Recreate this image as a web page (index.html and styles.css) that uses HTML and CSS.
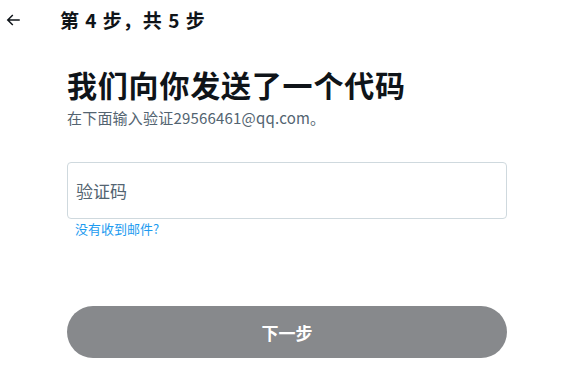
FILE: index.html
```html
<!doctype html>
<html lang="zh">
  <head>
    <meta charset="UTF-8" />
    <meta name="viewport" content="width=device-width, initial-scale=1.0" />
    <title>验证码</title>
    <link rel="stylesheet" href="styles.css">
  </head>
  <body>
    <div class="topbar">
      <button class="back-btn" aria-label="返回">
        <svg viewBox="0 0 24 24" width="18" height="18">
          <path d="M7.414 13l5.043 5.04-1.414 1.42L3.586 12l7.457-7.46 1.414 1.42L7.414 11H21v2H7.414z"/>
        </svg>
      </button>
      <div class="step">第 4 步，共 5 步</div>
    </div>

    <div class="content">
      <h1>我们向你发送了一个代码</h1>
      <p class="sub">在下面输入验证29566461@qq.com。</p>

      <div class="field">
        <input type="text" placeholder="验证码" />
      </div>
      <a class="resend" href="#">没有收到邮件?</a>

      <button class="next-btn" disabled>下一步</button>
    </div>
  </body>
</html>
```

FILE: styles.css
```css
body {
  margin: 0;
  font-family: "Noto Sans CJK SC", "Liberation Sans", sans-serif;
  background-color: #fff;
  color: #0f1419;
}

.topbar {
  display: flex;
  align-items: center;
  height: 40px;
}

.back-btn {
  width: 28px;
  height: 40px;
  padding: 0 0 0 4px;
  border: none;
  background: none;
  display: flex;
  align-items: center;
  cursor: pointer;
}

.back-btn svg {
  fill: #0f1419;
}

.step {
  margin-left: 32px;
  margin-top: -1px;
  font-size: 19px;
  font-weight: 700;
  letter-spacing: 1px;
}

.content {
  padding: 24px 61px 0 67px;
}

.content h1 {
  margin: 0;
  font-size: 30px;
  font-weight: 700;
  line-height: 40px;
  letter-spacing: 0.8px;
}

.sub {
  margin: 4px 0 0;
  font-size: 15px;
  line-height: 20px;
  letter-spacing: 0.2px;
  color: #536471;
}

.field {
  margin-top: 34px;
  height: 55px;
  border: 1px solid #cfd9de;
  border-radius: 4px;
  display: flex;
}

.field input {
  flex: 1;
  border: none;
  outline: none;
  background: transparent;
  padding: 0 8px;
  font-family: inherit;
  font-size: 17px;
  color: #0f1419;
}

.field input::placeholder {
  color: #536471;
}

.resend {
  display: block;
  margin: 1px 0 0 8px;
  font-size: 13px;
  line-height: 18px;
  color: #1d9bf0;
  text-decoration: none;
}

.next-btn {
  display: block;
  width: 100%;
  height: 52px;
  margin-top: 68px;
  border: none;
  border-radius: 26px;
  background-color: #87898c;
  color: #fff;
  font-family: inherit;
  font-size: 17px;
  font-weight: 700;
}
```
